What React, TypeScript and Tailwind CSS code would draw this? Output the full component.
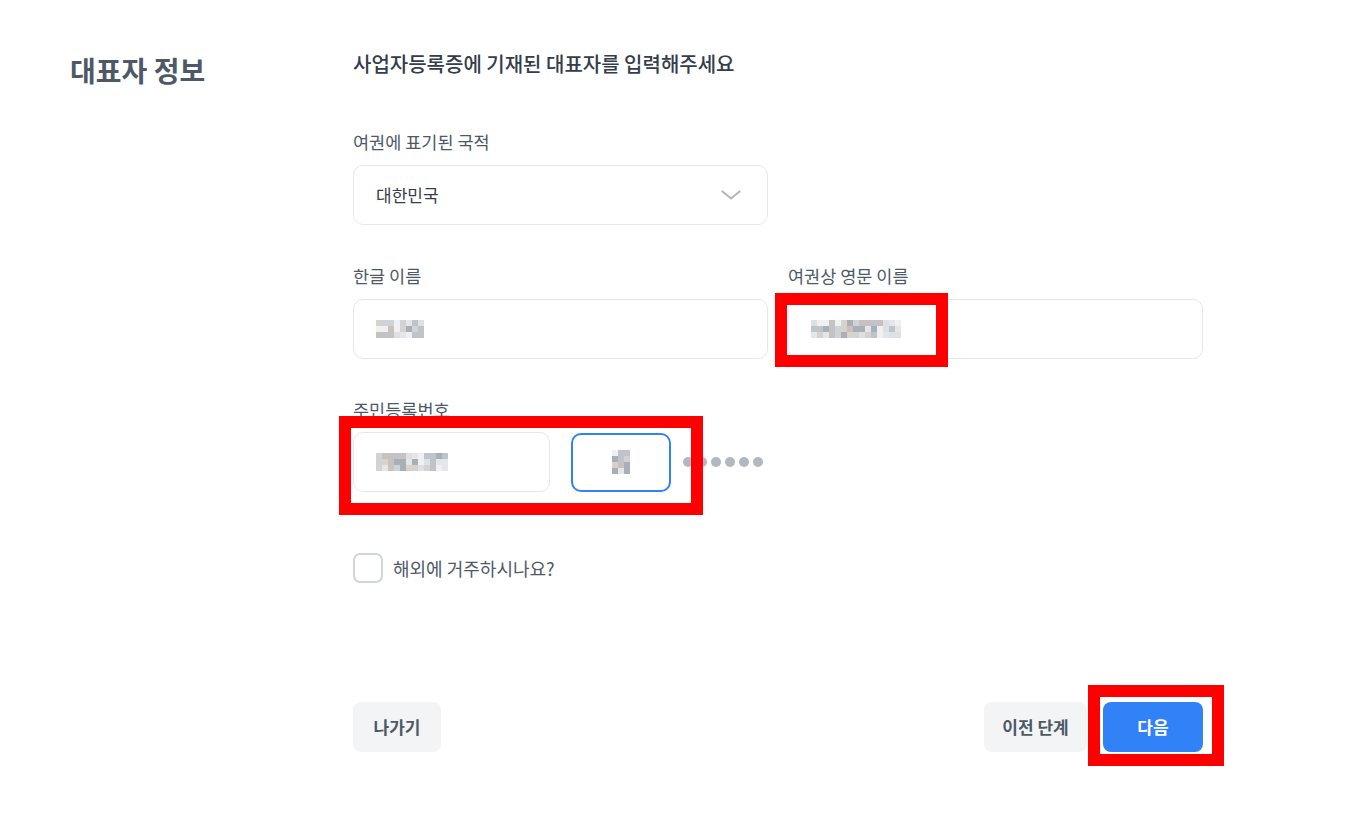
const font = { fontFamily: '"Noto Sans CJK KR", "Noto Sans", sans-serif' };

// blurred (pixelated) field values
const Blur = ({ cols, shades }: { cols: number; shades: string[] }) => (
  <div className="grid gap-0" style={{ gridTemplateColumns: `repeat(${cols}, 6px)` }}>
    {shades.map((c, i) => (
      <span key={i} className="h-[6px] w-[6px]" style={{ background: c }} />
    ))}
  </div>
);

const g = ["#e4e6ea", "#cfd3d8", "#bfc4ca", "#d8d2cc", "#eef0f2", "#a9afb6", "#dde0e4", "#c7c2bd"];
const pick = (n: number, seed: number) =>
  Array.from({ length: n }, (_, i) => g[(i * 5 + seed * 3 + ((i * i) % 7)) % g.length]);

const Label = ({ children }: { children: string }) => (
  <p className="text-[17.5px] leading-[22px] text-[#4e5968]">{children}</p>
);

const Field = ({ className = "", children }: { className?: string; children?: React.ReactNode }) => (
  <div className={`flex h-[60px] items-center rounded-[10px] border border-[#e5e8eb] bg-white px-[22px] ${className}`}>
    {children}
  </div>
);

export default function App() {
  return (
    <div className="relative min-h-[821px] w-[1360px] bg-white" style={font}>
      <div className="flex pl-[70px] pt-[50px]">
        {/* Left */}
        <div className="w-[283px]">
          <h2 className="text-[28px] font-bold leading-[40px] text-[#4e5968]">대표자 정보</h2>
        </div>

        {/* Right */}
        <div className="w-[850px]">
          <p className="text-[20px] font-medium leading-[27px] text-[#333d4b]">
            사업자등록증에 기재된 대표자를 입력해주세요
          </p>

          <div className="mt-[54px]">
            <Label>여권에 표기된 국적</Label>
            <Field className="mt-[12px] w-[415px] justify-between pr-[26px]">
              <span className="text-[17px] text-[#333d4b]">대한민국</span>
              <svg width="20" height="10" viewBox="0 0 20 10" fill="none">
                <path d="M1.5 1.5 10 8.5 18.5 1.5" stroke="#b0b8c1" strokeWidth="2.2" strokeLinecap="round" strokeLinejoin="round" />
              </svg>
            </Field>
          </div>

          <div className="mt-[40px] grid grid-cols-2 gap-x-[20px]">
            <div>
              <Label>한글 이름</Label>
              <Field className="mt-[12px]">
                <Blur cols={8} shades={pick(24, 1)} />
              </Field>
            </div>
            <div>
              <Label>여권상 영문 이름</Label>
              <Field className="mt-[12px]">
                <Blur cols={15} shades={pick(45, 2)} />
              </Field>
            </div>
          </div>

          <div className="mt-[40px]">
            <Label>주민등록번호</Label>
            <div className="mt-[11px] flex items-center">
              <Field className="w-[197px]">
                <Blur cols={12} shades={pick(36, 3)} />
              </Field>
              <div className="ml-[21px] flex h-[59px] w-[100px] items-center justify-center rounded-[10px] border-2 border-[#3182f6] bg-white">
                <Blur cols={3} shades={pick(12, 4)} />
              </div>
              <div className="ml-[12px] flex gap-[4px]">
                {[0, 1, 2, 3, 4, 5].map((i) => (
                  <span key={i} className="h-[10px] w-[10px] rounded-full bg-[#b0b8c1]" />
                ))}
              </div>
            </div>
          </div>

          <label className="mt-[61px] flex items-center gap-[10px]">
            <span className="h-[30px] w-[30px] rounded-[7px] border-2 border-[#d1d6db]" />
            <span className="text-[18px] text-[#4e5968]">해외에 거주하시나요?</span>
          </label>

          <div className="mt-[119px] flex items-center justify-between">
            <button className="h-[50px] w-[88px] rounded-[8px] bg-[#f2f4f6] text-[17px] font-bold text-[#4e5968]">
              나가기
            </button>
            <div className="flex gap-[16px]">
              <button className="h-[50px] w-[103px] rounded-[8px] bg-[#f2f4f6] text-[17px] font-bold text-[#4e5968]">
                이전 단계
              </button>
              <button className="h-[50px] w-[100px] rounded-[8px] bg-[#3182f6] text-[17px] font-bold text-white">
                다음
              </button>
            </div>
          </div>
        </div>
      </div>

      {/* red annotation boxes */}
      <div className="pointer-events-none absolute left-[775px] top-[293px] h-[74px] w-[173px] border-[12px] border-[#ff0000]" />
      <div className="pointer-events-none absolute left-[339px] top-[416px] h-[99px] w-[364px] border-[12px] border-[#ff0000]" />
      <div className="pointer-events-none absolute left-[1088px] top-[685px] h-[81px] w-[136px] border-[12px] border-[#ff0000]" />
    </div>
  );
}
